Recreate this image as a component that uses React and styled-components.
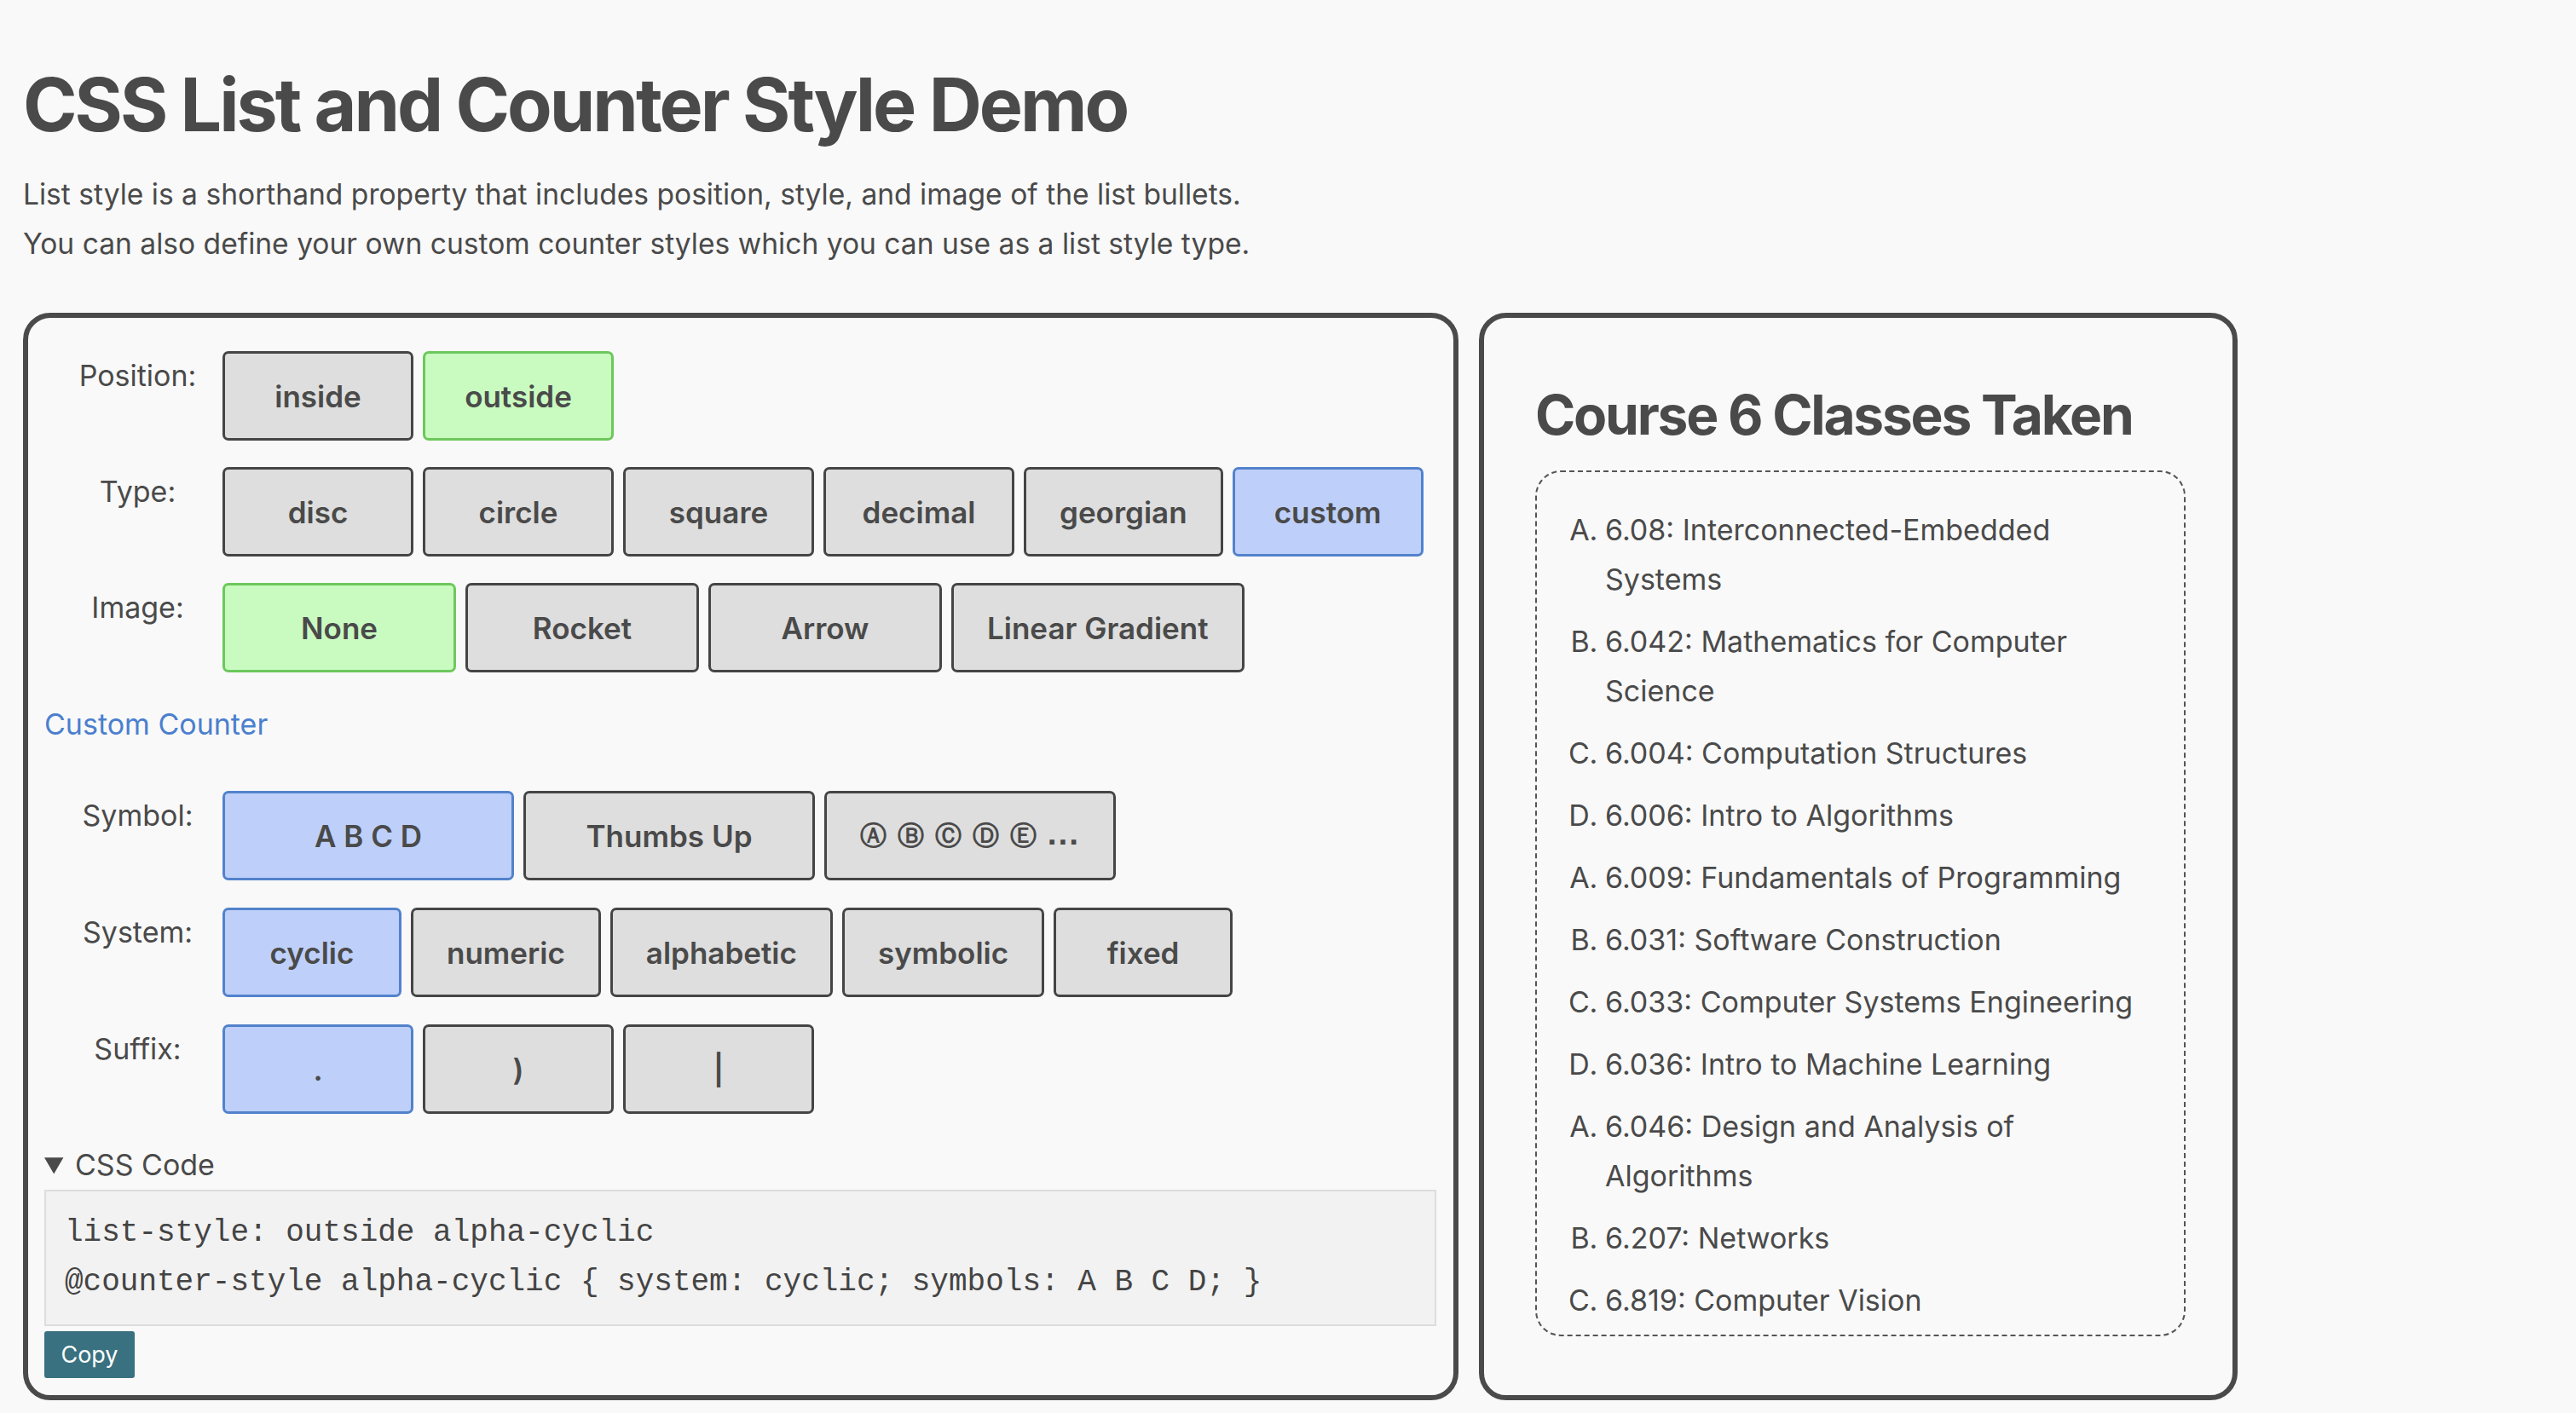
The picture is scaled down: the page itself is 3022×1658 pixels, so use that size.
import styled, { createGlobalStyle } from "styled-components";

const GlobalStyle = createGlobalStyle`
  @counter-style alpha-cyclic {
    system: cyclic;
    symbols: A B C D;
    suffix: ". ";
  }

  html, body {
    margin: 0;
    padding: 0;
    background: #f9f9f9;
  }

  body {
    font-family: Inter, "Noto Sans", "DejaVu Sans", sans-serif;
    color: #4a4a4a;
  }
`;

const Page = styled.div`
  padding: 0 27px 16px;
`;

const Title = styled.h1`
  margin: 72px 0 0;
  font-size: 86px;
  line-height: 1.2;
  font-weight: 700;
  letter-spacing: -0.035em;
`;

const Intro = styled.div`
  margin-top: 24px;

  > p {
    margin: 0;
    font-size: 33.6px;
    line-height: 58px;
  }
`;

const Panels = styled.div`
  display: flex;
  align-items: stretch;
  gap: 24px;
  margin-top: 52px;
`;

const Panel = styled.section`
  box-sizing: border-box;
  width: ${(p) => p.$width}px;
  border: 6px solid #4a4a4a;
  border-radius: 32px;
  background: #f9f9f9;
`;

const Controls = styled(Panel)`
  padding: 39px 20px 20px 19px;
  display: flex;
  flex-direction: column;
`;

const Rows = styled.div`
  display: flex;
  flex-direction: column;
  gap: ${(p) => p.$gap}px;
`;

const Row = styled.div`
  display: flex;
  align-items: flex-start;
`;

const Label = styled.div`
  box-sizing: border-box;
  width: 209px;
  padding: 8px 0 0 10px;
  text-align: center;
  font-size: 34px;
  line-height: normal;
`;

const Buttons = styled.div`
  display: flex;
  gap: 11px;
`;

const tones = {
  plain: { bg: "#dedede", border: "#454545" },
  green: { bg: "#c9fbc1", border: "#6cc85b" },
  blue: { bg: "#bed0f9", border: "#5282cb" },
};

const Option = styled.button`
  box-sizing: border-box;
  min-width: ${(p) => p.$min}px;
  height: 105px;
  padding: 0 39px;
  border: 3px solid ${(p) => tones[p.$tone].border};
  border-radius: 7px;
  background: ${(p) => tones[p.$tone].bg};
  color: #4a4a4a;
  font-family: Inter, "DejaVu Sans", sans-serif;
  font-size: 35px;
  font-weight: 600;
  white-space: nowrap;
  display: inline-flex;
  align-items: center;
  justify-content: center;
  cursor: pointer;
`;

const Circled = styled.span`
  font-family: "DejaVu Sans", sans-serif;
  font-size: 31px;
  font-weight: 700;
  letter-spacing: 1px;
`;

const SubHeading = styled.div`
  margin: 37px 0 54px;
  font-size: 34px;
  line-height: 48px;
  color: #4b7fcf;
`;

const CodeDetails = styled.details`
  margin-top: 36px;

  > summary {
    font-size: 34px;
    line-height: 48px;
    cursor: pointer;
  }
`;

const Code = styled.pre`
  margin: 5px 0 0;
  padding: 20px 22px;
  background: #f2f2f2;
  border: 2px solid #dddddd;
  font-family: "Liberation Mono", "DejaVu Sans Mono", monospace;
  font-size: 36px;
  line-height: 58px;
  color: #444;
`;

const CopyButton = styled.button`
  align-self: flex-start;
  margin-top: 6px;
  width: 106px;
  height: 55px;
  padding: 0;
  border: none;
  border-radius: 3px;
  background: #3a7180;
  color: #ffffff;
  font-family: Inter, sans-serif;
  font-size: 27px;
`;

const Preview = styled(Panel)`
  padding: 0 55px 0 60px;
`;

const PreviewTitle = styled.h2`
  margin: 76px 0 0;
  font-size: 64px;
  line-height: 1.2;
  font-weight: 700;
  letter-spacing: -0.035em;
`;

const ListBox = styled.div`
  margin-top: 26px;
  border: 2px dashed #555;
  border-radius: 30px;
`;

const CourseList = styled.ul`
  margin: 0;
  padding: 39px 30px 11px 80px;
  list-style: ${(p) => p.$position} alpha-cyclic;
  font-size: 34px;
  line-height: 58px;

  > li + li {
    margin-top: 15px;
  }
`;

const positions = ["inside", "outside"];
const types = ["disc", "circle", "square", "decimal", "georgian", "custom"];
const images = ["None", "Rocket", "Arrow", "Linear Gradient"];
const symbols = ["A B C D", "Thumbs Up", "circled"];
const systems = ["cyclic", "numeric", "alphabetic", "symbolic", "fixed"];
const suffixes = [".", ")", "|"];

const courses = [
  "6.08: Interconnected-Embedded Systems",
  "6.042: Mathematics for Computer Science",
  "6.004: Computation Structures",
  "6.006: Intro to Algorithms",
  "6.009: Fundamentals of Programming",
  "6.031: Software Construction",
  "6.033: Computer Systems Engineering",
  "6.036: Intro to Machine Learning",
  "6.046: Design and Analysis of Algorithms",
  "6.207: Networks",
  "6.819: Computer Vision",
];

const OptionRow = ({ label, items, selected, tone, min }) => (
  <Row>
    <Label>{label}</Label>
    <Buttons>
      {items.map((item) => (
        <Option key={item} $min={min} $tone={item === selected ? tone : "plain"}>
          {item === "circled" ? <Circled>Ⓐ Ⓑ Ⓒ Ⓓ Ⓔ ...</Circled> : item}
        </Option>
      ))}
    </Buttons>
  </Row>
);

const App = () => {
  return (
    <>
      <GlobalStyle />
      <Page>
        <Title>CSS List and Counter Style Demo</Title>
        <Intro>
          <p>List style is a shorthand property that includes position, style, and image of the list bullets.</p>
          <p>You can also define your own custom counter styles which you can use as a list style type.</p>
        </Intro>

        <Panels>
          <Controls $width={1684}>
            <Rows $gap={31}>
              <OptionRow label="Position:" items={positions} selected="outside" tone="green" min={224} />
              <OptionRow label="Type:" items={types} selected="custom" tone="blue" min={224} />
              <OptionRow label="Image:" items={images} selected="None" tone="green" min={274} />
            </Rows>

            <SubHeading>Custom Counter</SubHeading>

            <Rows $gap={32}>
              <OptionRow label="Symbol:" items={symbols} selected="A B C D" tone="blue" min={342} />
              <OptionRow label="System:" items={systems} selected="cyclic" tone="blue" min={210} />
              <OptionRow label="Suffix:" items={suffixes} selected="." tone="blue" min={224} />
            </Rows>

            <CodeDetails open>
              <summary>CSS Code</summary>
              <Code>
                {"list-style: outside alpha-cyclic\n@counter-style alpha-cyclic { system: cyclic; symbols: A B C D; }"}
              </Code>
            </CodeDetails>
            <CopyButton>Copy</CopyButton>
          </Controls>

          <Preview $width={890}>
            <PreviewTitle>Course 6 Classes Taken</PreviewTitle>
            <ListBox>
              <CourseList $position="outside">
                {courses.map((c) => (
                  <li key={c}>{c}</li>
                ))}
              </CourseList>
            </ListBox>
          </Preview>
        </Panels>
      </Page>
    </>
  );
};

export default App;
